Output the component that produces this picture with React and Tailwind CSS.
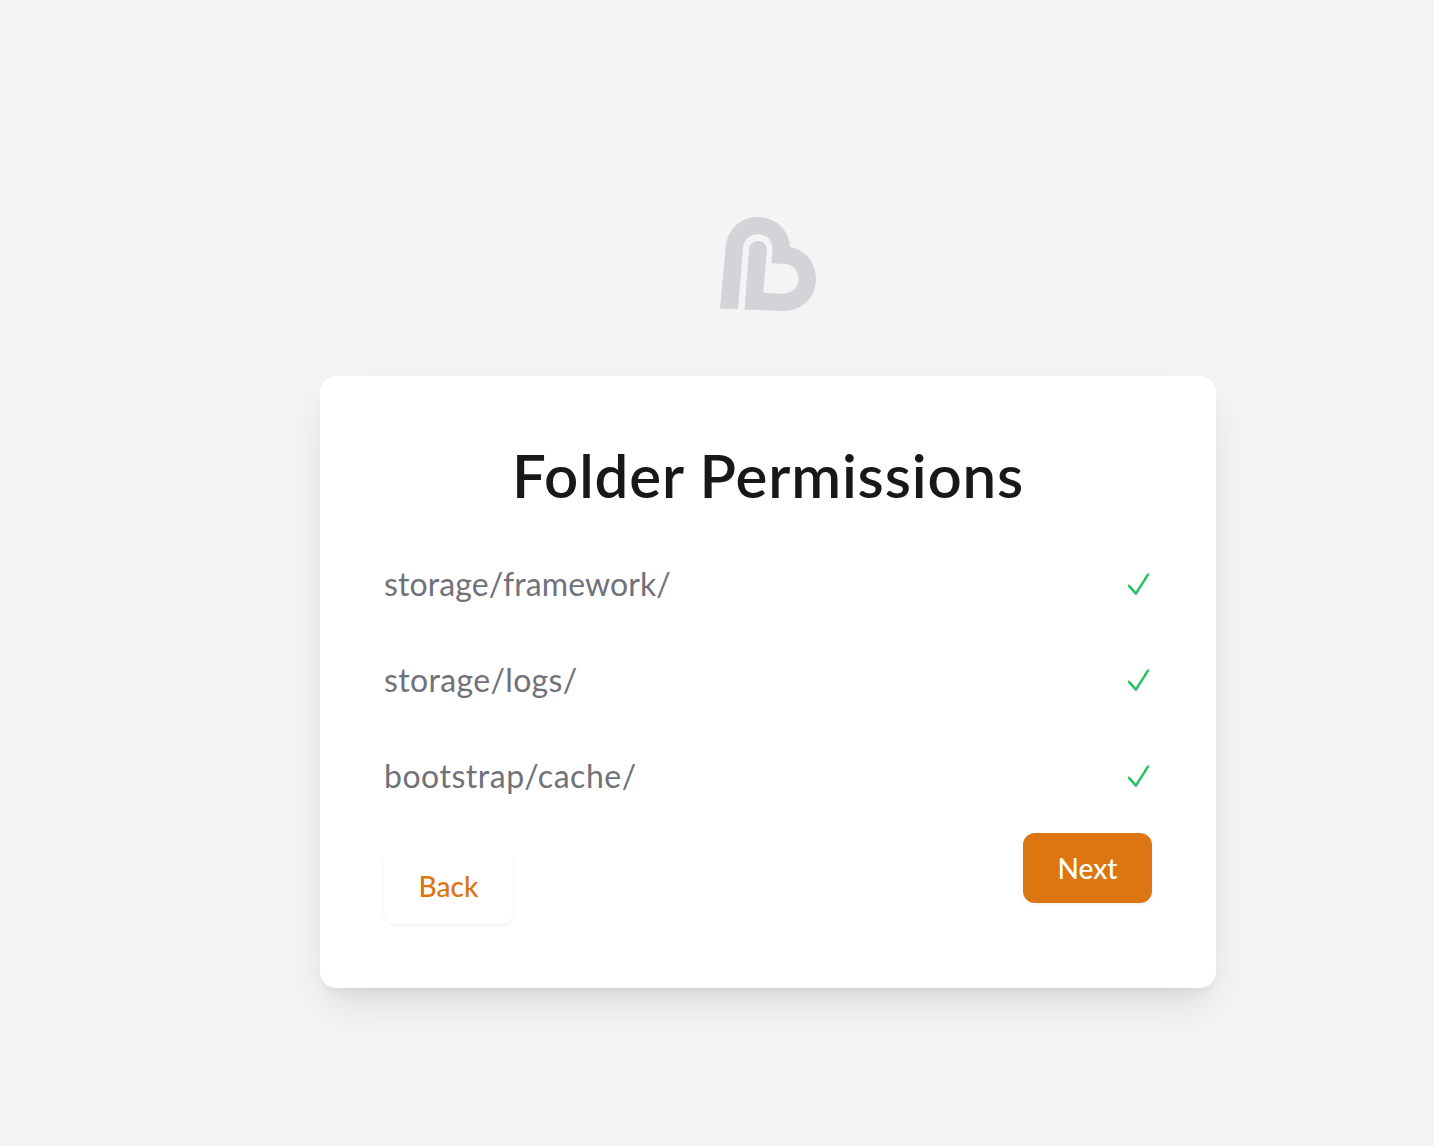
import React from "react";

const folders = [
  { name: "storage/framework/", tracking: "tracking-[0.1px]" },
  { name: "storage/logs/", tracking: "tracking-[0.35px]" },
  { name: "bootstrap/cache/", tracking: "tracking-[0.52px]" },
];

function Logo() {
  return (
    <svg className="h-24 w-24 fill-[#d4d4d8]" viewBox="0 0 96 96">
      <path d="M0 92.5 L5.7 31 C7.2 13.5 20.5 1 37.5 1 C55.5 1 69.5 14.5 70 31 C85.5 33.5 96 47 96 63 C96 81.5 81.5 95.5 63 95 L24.5 93.5 L29 33 C30 22.2 47.6 22 46.9 34.5 L43.2 76.8 L63 77.7 C84 77.5 83.5 48.2 63.7 48 L51.5 47.2 L52.6 34 C53.3 13.8 24.5 13 23 32 L18 93 Z" />
    </svg>
  );
}

function Check() {
  return (
    <svg
      className="h-8 w-8 fill-none stroke-[#22c55e] stroke-[2.5]"
      viewBox="0 0 32 32"
      strokeLinecap="round"
      strokeLinejoin="round"
    >
      <path d="M9 17.8 L15.9 25.6 L28 6.6" />
    </svg>
  );
}

export default function App() {
  return (
    <div className="flex h-[1146px] w-[1434px] flex-col items-start overflow-hidden bg-[#f4f4f4] pt-[216px] pl-80 font-['Lato',sans-serif]">
      <div className="flex w-[896px] justify-center">
        <Logo />
      </div>
      <main className="mt-16 h-[612px] w-[896px] rounded-2xl bg-white px-16 pt-[63px] shadow-[0_20px_40px_-7px_rgba(0,0,0,0.11),0_8px_14px_-8px_rgba(0,0,0,0.1)]">
        <h1 className="text-center text-[60px] leading-[72px] font-semibold tracking-[0.86px] whitespace-nowrap text-[#18181b]">
          Folder Permissions
        </h1>
        <ul className="pt-[25px]">
          {folders.map(({ name, tracking }) => (
            <li key={name} className="flex h-24 items-center justify-between text-[#71717a]">
              <span className={"text-[32px] leading-12 " + tracking}>{name}</span>
              <Check />
            </li>
          ))}
        </ul>
        <div className="flex items-start justify-between">
          <button className="mt-[25px] h-[75px] w-[129px] rounded-xl bg-white pb-0.5 text-[28px] font-medium text-[#dd7411] shadow-[0_2px_4px_rgba(0,0,0,0.05)]">
            Back
          </button>
          <button className="mt-[9px] h-[70px] w-[129px] rounded-xl bg-[#dd7511] text-[28px] font-medium text-white shadow-[0_2px_4px_rgba(0,0,0,0.05)]">
            Next
          </button>
        </div>
      </main>
    </div>
  );
}
